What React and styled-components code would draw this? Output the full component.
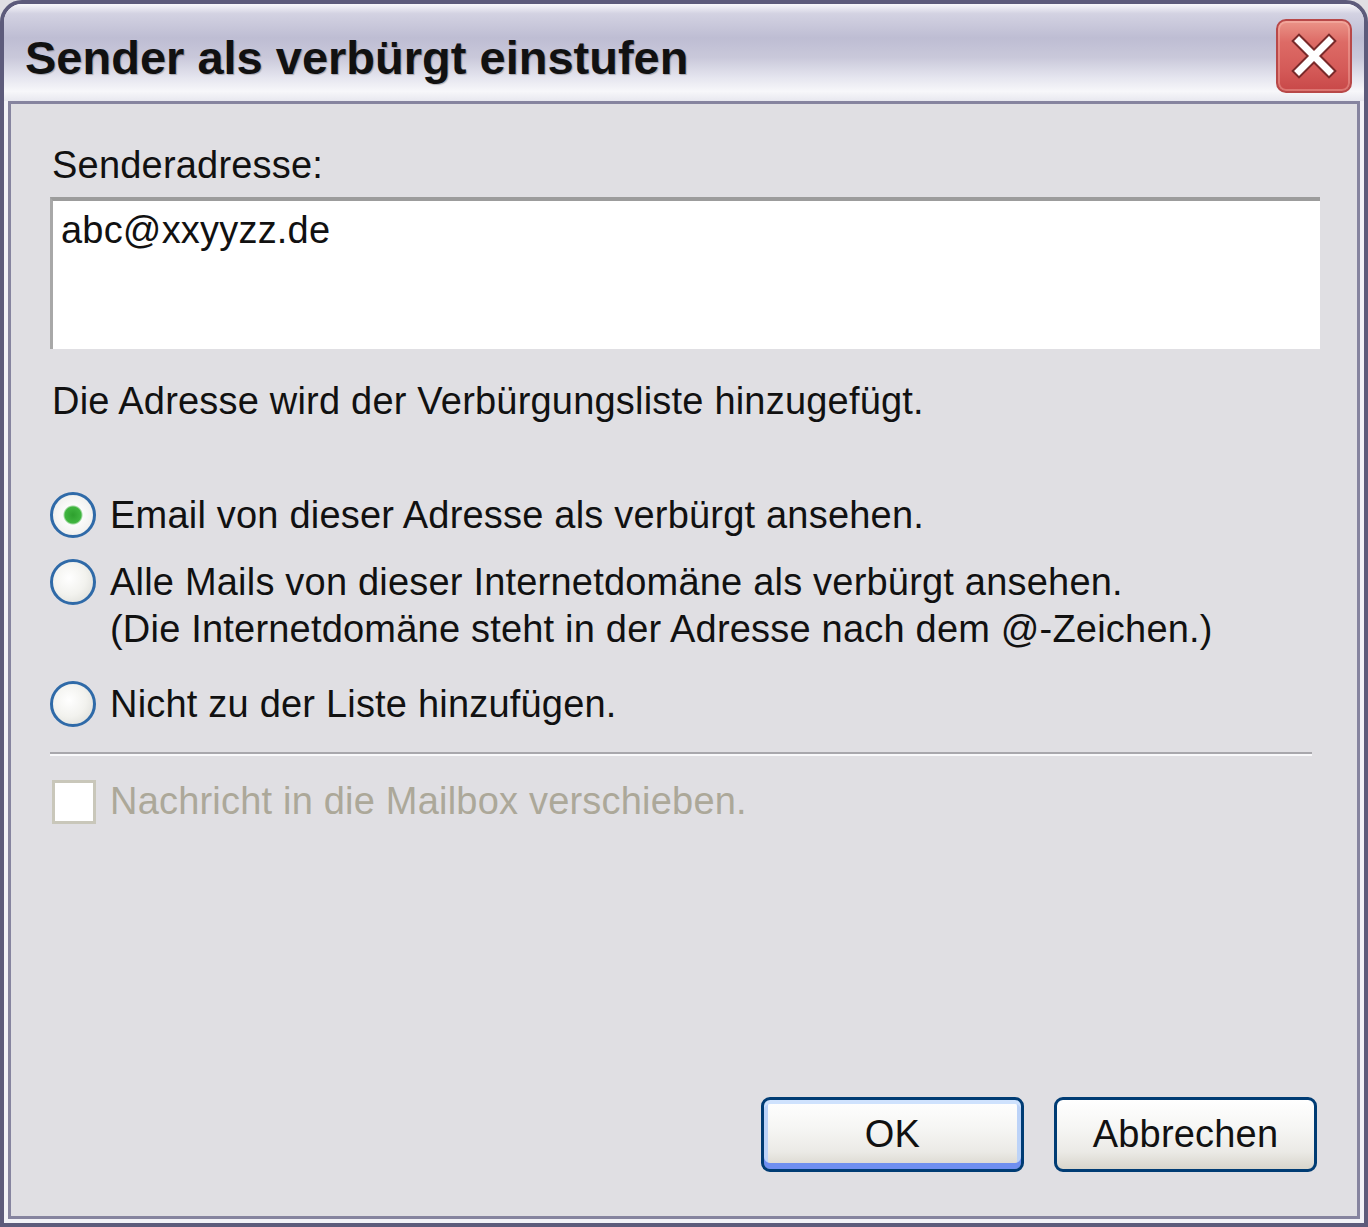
import styled, { createGlobalStyle } from "styled-components";

const GlobalStyle = createGlobalStyle`
  html, body {
    margin: 0;
    padding: 0;
    background: #e0dfe3;
  }
  body {
    font-family: "Liberation Sans", Arial, sans-serif;
  }
`;

const options = [
  { lines: ["Email von dieser Adresse als verbürgt ansehen."], checked: true, top: 67 },
  {
    lines: [
      "Alle Mails von dieser Internetdomäne als verbürgt ansehen.",
      "(Die Internetdomäne steht in der Adresse nach dem @-Zeichen.)",
    ],
    top: 20,
  },
  { lines: ["Nicht zu der Liste hinzufügen."], top: 28 },
];

export default function App() {
  return (
    <>
      <GlobalStyle />
      <Window>
        <TitleBar>
          <Title>Sender als verbürgt einstufen</Title>
          <CloseButton aria-label="Schließen">
            <svg width="50" height="50" viewBox="0 0 50 50">
              <path d="M10 10 L40 40 M40 10 L10 40" stroke="#7a2a2a" strokeWidth="11" strokeLinecap="square" />
              <path d="M10 10 L40 40 M40 10 L10 40" stroke="#ffffff" strokeWidth="7" strokeLinecap="square" />
            </svg>
          </CloseButton>
        </TitleBar>
        <Client>
          <Label>Senderadresse:</Label>
          <AddressBox>abc@xxyyzz.de</AddressBox>
          <Info>Die Adresse wird der Verbürgungsliste hinzugefügt.</Info>
          <RadioList>
            {options.map((opt, i) => (
              <RadioRow key={i} $top={opt.top}>
                <Radio $checked={opt.checked} />
                <RadioText>
                  {opt.lines.map((l) => (
                    <div key={l}>{l}</div>
                  ))}
                </RadioText>
              </RadioRow>
            ))}
          </RadioList>
          <Separator />
          <CheckRow>
            <CheckBox />
            <DisabledText>Nachricht in die Mailbox verschieben.</DisabledText>
          </CheckRow>
          <Footer>
            <Button $default>OK</Button>
            <Button>Abbrechen</Button>
          </Footer>
        </Client>
      </Window>
    </>
  );
}

const Window = styled.div`
  box-sizing: border-box;
  width: 1368px;
  height: 1227px;
  display: flex;
  flex-direction: column;
  background: #f2f2f7;
  border: 4px solid #5d5b7b;
  border-radius: 22px 22px 0 0;
  overflow: hidden;
`;

const TitleBar = styled.div`
  height: 97px;
  flex-shrink: 0;
  display: flex;
  align-items: center;
  justify-content: space-between;
  padding: 0 12px 0 21px;
  background: linear-gradient(
    #f8f8fb 0%,
    #d3d2e2 10%,
    #bebdd3 35%,
    #c9c8da 55%,
    #e4e4ee 75%,
    #f7f7fa 90%,
    #e8e8ef 100%
  );
`;

const Title = styled.div`
  font-family: "Liberation Sans", Arial, sans-serif;
  font-weight: bold;
  font-size: 47px;
  color: #111;
  text-shadow: 1px 1px 1px rgba(0, 0, 0, 0.25);
  margin-top: 10px;
`;

const CloseButton = styled.div`
  box-sizing: border-box;
  width: 76px;
  height: 74px;
  margin-top: 6px;
  border-radius: 10px;
  border: 2px solid #b84848;
  background: linear-gradient(#eb9488 0%, #dd6b66 30%, #d45a58 70%, #c84848 100%);
  display: flex;
  align-items: center;
  justify-content: center;
  box-shadow: inset 0 0 0 2px rgba(255, 200, 190, 0.35);
`;

const Client = styled.div`
  flex: 1;
  display: flex;
  flex-direction: column;
  margin: 0 4px 4px;
  padding: 38px 40px 44px 41px;
  background: #e0dfe3;
  border: 3px solid #86849f;
  font-size: 38px;
  letter-spacing: 0.2px;
  line-height: 47px;
  color: #111;
`;

const Label = styled.div``;

const AddressBox = styled.div`
  box-sizing: border-box;
  margin-top: 8px;
  height: 152px;
  width: 1270px;
  margin-left: -2px;
  background: #fff;
  border-top: 4px solid #9c9c9c;
  border-left: 3px solid #a8a8a8;
  padding: 6px 0 0 8px;
  line-height: 47px;
`;

const Info = styled.div`
  margin-top: 29px;
`;

const RadioList = styled.div`
  display: flex;
  flex-direction: column;
`;

const RadioRow = styled.div`
  display: flex;
  align-items: flex-start;
  margin-top: ${(p) => p.$top}px;
`;

const Radio = styled.span`
  box-sizing: border-box;
  flex-shrink: 0;
  width: 46px;
  height: 46px;
  margin: 0 14px 0 -2px;
  border-radius: 50%;
  border: 3px solid #2f6aa8;
  background: ${(p) =>
    p.$checked
      ? "radial-gradient(circle, #2ea02e 0, #3fb53f 8px, #fbfbfb 10px, #e8e8e4 100%)"
      : "radial-gradient(circle at 40% 40%, #ffffff 0, #f2f2ee 50%, #d8d8d2 100%)"};
`;

const RadioText = styled.div``;

const Separator = styled.div`
  margin-top: 24px;
  margin-left: -2px;
  width: 1262px;
  border-top: 2px solid #a8a7ac;
  border-bottom: 2px solid #f8f8fa;
`;

const CheckRow = styled.div`
  display: flex;
  align-items: center;
  margin-top: 22px;
`;

const CheckBox = styled.span`
  box-sizing: border-box;
  width: 44px;
  height: 44px;
  margin-right: 14px;
  background: #fff;
  border: 3px solid #c9c7ba;
`;

const DisabledText = styled.span`
  color: #aca899;
`;

const Footer = styled.div`
  margin-top: auto;
  display: flex;
  justify-content: flex-end;
  gap: 30px;
`;

const Button = styled.div`
  box-sizing: border-box;
  width: 263px;
  height: 75px;
  display: flex;
  align-items: center;
  justify-content: center;
  border: 3px solid #003c74;
  border-radius: 9px;
  background: linear-gradient(#ffffff 0%, #f6f6f4 40%, #ebeae6 75%, #d8d5cc 100%);
  color: #111;
  box-shadow: ${(p) =>
    p.$default
      ? "inset 0 -6px 0 #6f8ff0, inset 0 4px 0 #cfe2fd, inset 4px 0 0 #bcd3f8, inset -4px 0 0 #bcd3f8"
      : "none"};
`;
